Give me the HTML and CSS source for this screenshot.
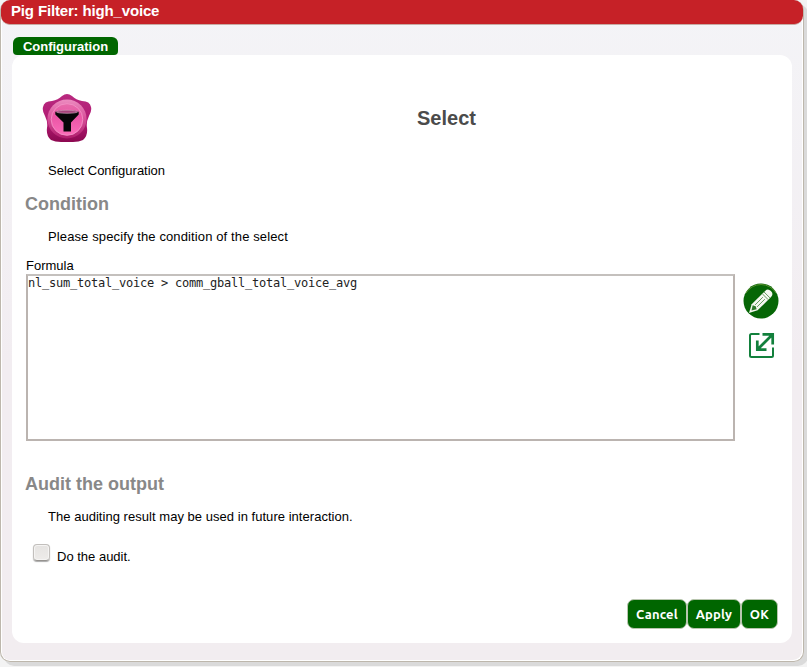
FILE: index.html
```
<!DOCTYPE html>
<html lang="en">
<head>
<meta charset="utf-8">
<title>Pig Filter: high_voice</title>
<link rel="stylesheet" href="styles.css">
</head>
<body>
<main class="dialog">
  <header class="titlebar">Pig Filter: high_voice</header>
  <div class="content">
    <nav class="tabs"><span class="tab">Configuration</span></nav>
    <section class="panel">
      <div class="heading">
        <svg class="logo" viewBox="0 0 50 50">
          <defs>
            <linearGradient id="star" x1="0" y1="0" x2="0" y2="1"><stop offset="0" stop-color="#b92a80"/><stop offset=".6" stop-color="#b01a72"/><stop offset="1" stop-color="#8c0850"/></linearGradient>
            <linearGradient id="ring" x1="0" y1="0" x2="0" y2="1"><stop offset="0" stop-color="#ec8cc0"/><stop offset=".45" stop-color="#d9549c"/><stop offset="1" stop-color="#b01c6c"/></linearGradient>
            <linearGradient id="disc" x1="0" y1="0" x2="0" y2="1"><stop offset="0" stop-color="#e66cab"/><stop offset=".4" stop-color="#ea55a5"/><stop offset="1" stop-color="#fb6db9"/></linearGradient>
          </defs>
          <path d="M20 3Q25-1 30 3Q34 7 40 8Q48 8 49 14Q50 18 47 23Q44 29 45 35Q46 43 41 47Q37 49 31 49H19Q13 49 9 47Q4 43 5 35Q6 29 3 23Q0 18 1 14Q2 8 10 8Q16 7 20 3Z" fill="url(#star)"/>
          <circle cx="25" cy="26" r="19.600" fill="url(#ring)"/>
          <circle cx="25" cy="26.500" r="15.800" fill="url(#disc)" stroke="#f391c5" stroke-width=".9"/>
          <path d="M13.300 19Q14 17.200 25 17.200T36.700 19V21.500L29 29.500V38.500H21.500V29.500L13.300 21.500Z" fill="#080608"/>
          <ellipse cx="25" cy="18.800" rx="10.700" ry="1.500" fill="#a5437a" stroke="#efb2d4" stroke-width=".6"/>
        </svg>
        <h1>Select</h1>
      </div>
      <p class="intro">Select Configuration</p>
      <h2>Condition</h2>
      <p class="hint condition-hint">Please specify the condition of the select</p>
      <label class="field-label" for="formula">Formula</label>
      <div class="editor">
        <textarea id="formula" spellcheck="false">nl_sum_total_voice &gt; comm_gball_total_voice_avg</textarea>
        <div class="tools">
          <svg class="edit" viewBox="0 0 36 36">
            <circle cx="18" cy="18" r="17.500" fill="#066606"/>
            <path d="M3 10A17.500 17.500 0 0 1 33 10" fill="none" stroke="#6f9a3a" stroke-width=".8"/>
            <g transform="translate(6 30) rotate(-45)">
              <path d="M0 0L8-4.200H27Q31-4.200 31 0T27 4.200H8Z" fill="#f5f8f0"/>
              <path d="M3.500 0L8-2.800L9.500 0L8 2.800Z" fill="#2f7b2b"/>
              <path d="M10-1.400H21M10 1.400H21M23-4.200V4.200M25.500-4.200V4.200" fill="none" stroke="#5e9658" stroke-width=".9"/>
            </g>
          </svg>
          <svg class="expand" viewBox="0 0 27 27">
            <path d="M11.500 2H3.500Q2 2 2 3.500V23.500Q2 25 3.500 25H23.500Q25 25 25 23.500V15.500" fill="none" stroke="#12803c" stroke-width="2"/>
            <path d="M10.500 16.500L24 3M14.500 2.300H24.700V12.500M9.300 8.500V17.700H18.500" fill="none" stroke="#12803c" stroke-width="2.700"/>
          </svg>
        </div>
      </div>
      <h2 class="audit-title">Audit the output</h2>
      <p class="hint audit-hint">The auditing result may be used in future interaction.</p>
      <div class="audit"><span class="checkbox"></span><span>Do the audit.</span></div>
      <footer class="actions"><button>Cancel</button><button>Apply</button><button>OK</button></footer>
    </section>
  </div>
</main>
</body>
</html>
```
FILE: styles.css
```
* { box-sizing: border-box; }
html { background: #f3f3f3; }
body {
  margin: 0;
  width: 807px;
  height: 667px;
  overflow: hidden;
  font: 13px/16px "Liberation Sans", Arial, sans-serif;
  color: #000;
}
.dialog {
  width: 804px;
  height: 662px;
  border: 1px solid #bdb7ac;
  border-top: 0;
  border-radius: 10px;
  background: linear-gradient(#f4f4f7, #f2edf1 55%, #f2edf0);
  box-shadow: inset -1px -1px #fff, inset 1px 0 #fff, 4px 4px #dadada;
}
.titlebar {
  width: 802px;
  height: 25px;
  padding: 2px 10px 0;
  border-bottom: 1px solid #c7aaa3;
  border-radius: 9px;
  background: #c62127;
  color: #fff;
  font-size: 15px;
  font-weight: bold;
  line-height: 18px;
  letter-spacing: -.155px;
}
.content { padding: 12px 11px 0; }
.tabs { display: flex; height: 18px; }
.tab {
  width: 105px;
  height: 18px;
  margin-left: 1px;
  border-radius: 6px 6px 4px 4px;
  background: #060;
  color: #fff;
  font-weight: bold;
  line-height: 19px;
  text-align: center;
}
.panel {
  width: 780px;
  height: 588px;
  padding: 38px 12px 0 13px;
  border-radius: 12px;
  background: #fff;
}
.heading { display: flex; height: 50px; }
.logo { width: 50px; height: 50px; margin-left: 17px; }
h1 { margin: 14px 0 0 325px; color: #4b4b4b; font-size: 20px; line-height: 23px; }
p { margin: 0 0 0 23px; }
.intro { padding-top: 20px; }
h2 { margin: 15px 0 14px; color: #888; font-size: 18px; line-height: 21px; }
.condition-hint { letter-spacing: .12px; }
.audit-hint { letter-spacing: .035px; }
.field-label { display: block; margin: 13px 0 0 1px; }
.editor { display: flex; margin-left: 1px; }
textarea {
  display: block;
  flex: none;
  width: 709px;
  height: 167px;
  padding: 0;
  border: 2px solid #bbb4b0;
  border-top-color: #c4c0bd;
  outline: 0;
  resize: none;
  background: #fff;
  color: #222;
  font: 12px/14px "DejaVu Sans Mono", monospace;
  letter-spacing: -.224px;
}
.tools { display: flex; flex: none; flex-direction: column; align-items: center; gap: 13px; width: 36px; margin: 9px 0 0 8px; }
.edit { width: 36px; height: 36px; }
.expand { width: 27px; height: 27px; }
.audit-title { margin-top: 33px; }
.audit { display: flex; height: 22px; margin: 19px 0 0 8px; gap: 7px; }
.audit span:last-child { padding-top: 5px; }
.checkbox {
  width: 17px;
  height: 17px;
  border: 1px solid #c2bfbc;
  border-bottom-color: #969390;
  border-radius: 4px;
  background: linear-gradient(#e5e3e1, #eeecea);
  box-shadow: inset 0 0 0 1px #f5f4f3, 0 1px 1px #aaa;
}
.actions { display: flex; justify-content: flex-end; margin: 33px 2px 0 0; }
button {
  height: 30px;
  padding: 0;
  border: 1px solid #b8c5ae;
  border-radius: 7px;
  background: #060;
  color: #fff;
  font: bold 13px/16px Ubuntu, "Noto Sans", sans-serif;
  letter-spacing: .2px;
}
button:nth-child(1) { width: 60px; }
button:nth-child(2) { width: 54px; }
button:nth-child(3) { width: 37px; }
```
